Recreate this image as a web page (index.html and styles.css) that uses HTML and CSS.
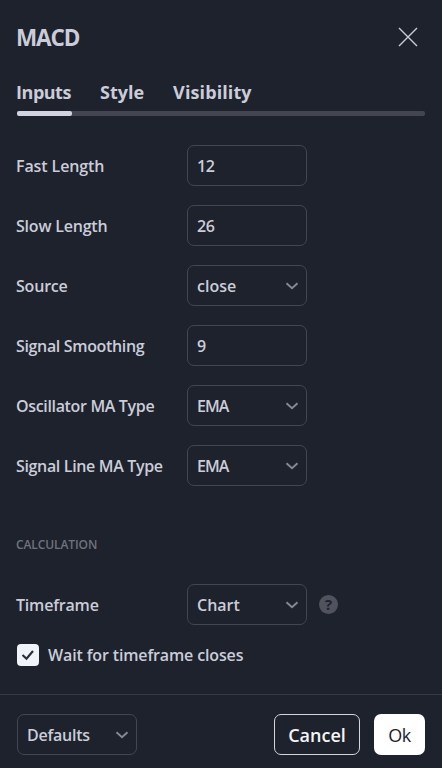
FILE: index.html
```html
<!DOCTYPE html>
<html lang="en">
<head>
  <meta charset="UTF-8" />
  <meta name="viewport" content="width=device-width, initial-scale=1.0" />
  <title>MACD</title>
  <link rel="stylesheet" href="styles.css">
</head>
<body>

  <div class="dialog">
    <div class="dialog-header">
      <h1>MACD</h1>
      <button type="button" class="close-btn" aria-label="Close">
        <svg width="20" height="20" viewBox="0 0 20 20"><path d="M1 1l18 18M19 1L1 19"/></svg>
      </button>
    </div>

    <div class="tabs">
      <button type="button" class="tab inputs-tab">Inputs</button>
      <button type="button" class="tab">Style</button>
      <button type="button" class="tab visibility-tab">Visibility</button>
    </div>
    <div class="tab-track"><div class="tab-thumb"></div></div>

    <!-- Inputs -->
    <div class="fields">
      <div class="row">
        <label for="fast">Fast Length</label>
        <input type="text" class="box" id="fast" value="12"/>
      </div>
      <div class="row">
        <label for="slow" class="slow">Slow Length</label>
        <input type="text" class="box" id="slow" value="26"/>
      </div>
      <div class="row">
        <label class="slow">Source</label>
        <button type="button" class="box select">
          <span>close</span>
          <svg class="chevron" width="14" height="8" viewBox="0 0 14 8"><path d="M1.5 1.3L7 6.3l5.5-5"/></svg>
        </button>
      </div>
      <div class="row">
        <label for="smoothing" class="long">Signal Smoothing</label>
        <input type="text" class="box" id="smoothing" value="9"/>
      </div>
      <div class="row">
        <label class="long">Oscillator MA Type</label>
        <button type="button" class="box select">
          <span class="ema">EMA</span>
          <svg class="chevron" width="14" height="8" viewBox="0 0 14 8"><path d="M1.5 1.3L7 6.3l5.5-5"/></svg>
        </button>
      </div>
      <div class="row">
        <label class="long">Signal Line MA Type</label>
        <button type="button" class="box select">
          <span class="ema">EMA</span>
          <svg class="chevron" width="14" height="8" viewBox="0 0 14 8"><path d="M1.5 1.3L7 6.3l5.5-5"/></svg>
        </button>
      </div>
    </div>

    <!-- Calculation -->
    <h2>CALCULATION</h2>
    <div class="row">
      <label class="slow">Timeframe</label>
      <button type="button" class="box select">
        <span>Chart</span>
        <svg class="chevron" width="14" height="8" viewBox="0 0 14 8"><path d="M1.5 1.3L7 6.3l5.5-5"/></svg>
      </button>
      <span class="help">?</span>
    </div>
    <div class="check-row">
      <span class="checkbox">
        <svg width="14" height="12" viewBox="0 0 14 12"><path d="M1.5 6l4 3.7L12 2"/></svg>
      </span>
      <span class="check-text">Wait for timeframe closes</span>
    </div>

    <div class="dialog-footer">
      <button type="button" class="box select defaults">
        <span>Defaults</span>
        <svg class="chevron" width="14" height="8" viewBox="0 0 14 8"><path d="M1.5 1.3L7 6.3l5.5-5"/></svg>
      </button>
      <button type="button" class="cancel-btn">Cancel</button>
      <button type="button" class="ok-btn">Ok</button>
    </div>
  </div>

</body>
</html>
```
FILE: styles.css
```css
* {
  margin: 0;
  padding: 0;
  box-sizing: border-box;
  font-family: "Open Sans", "Noto Sans", sans-serif;
}

body {
  background: #1e222d;
  color: #cacdd9;
  overflow: hidden;
}

button {
  border: none;
  background: none;
  color: inherit;
  cursor: pointer;
}

svg {
  display: block;
  fill: none;
  stroke: currentColor;
}

.dialog {
  height: 768px;
  display: flex;
  flex-direction: column;
}

.dialog-header {
  display: flex;
  align-items: center;
  justify-content: space-between;
  height: 74px;
  padding: 0 24px 0 16px;
}

h1 {
  font-size: 22.5px;
  font-weight: 700;
  letter-spacing: -1.1px;
}

.close-btn {
  stroke-width: 1.4;
}

.tabs {
  display: flex;
  height: 37px;
  padding-left: 16px;
  gap: 29px;
}

.tab {
  height: 35px;
  font-size: 18px;
  font-weight: 700;
}

.inputs-tab {
  width: 55px;
  letter-spacing: -0.5px;
}

.visibility-tab {
  letter-spacing: 0.1px;
}

.tab-track {
  height: 5px;
  margin: 0 17px;
  border-radius: 2px;
  background: #434651;
}

.tab-thumb {
  width: 55px;
  height: 5px;
  border-radius: 2px;
  background: #d1d4e0;
}

.fields {
  display: flex;
  flex-direction: column;
  gap: 19px;
  margin-top: 29px;
}

.row {
  display: flex;
  align-items: center;
  height: 41px;
  padding-left: 16px;
}

label {
  width: 171px;
  font-size: 16px;
  font-weight: 600;
  letter-spacing: -0.1px;
  white-space: nowrap;
}

label.slow {
  letter-spacing: -0.2px;
}

label.long {
  letter-spacing: -0.34px;
}

.box {
  width: 120px;
  height: 41px;
  padding: 0 9px;
  border: 1px solid #434651;
  border-radius: 7px;
  background: transparent;
  color: #cacdd9;
  font-size: 16px;
  font-weight: 600;
}

input.box {
  letter-spacing: -0.4px;
}

.ema {
  letter-spacing: -0.9px;
}

.defaults {
  letter-spacing: -0.25px;
}

.select {
  display: flex;
  align-items: center;
  justify-content: space-between;
}

.chevron {
  margin-right: -2px;
  color: #868993;
  stroke-width: 1.9;
}

h2 {
  height: 18px;
  margin: 50px 0 30px 16px;
  font-size: 12px;
  line-height: 18px;
  font-weight: 600;
  letter-spacing: -0.1px;
  color: #6f727d;
}

.help {
  width: 19px;
  height: 19px;
  margin-left: 12px;
  border-radius: 50%;
  background: #50535e;
  color: #1e222d;
  font-size: 15px;
  line-height: 19px;
  font-weight: 700;
  text-align: center;
}

.check-row {
  display: flex;
  align-items: center;
  height: 22px;
  margin: 19px 0 0 17px;
  gap: 9px;
}

.checkbox {
  display: flex;
  align-items: center;
  justify-content: center;
  width: 22px;
  height: 22px;
  border-radius: 4px;
  background: #f0f3fa;
  color: #2a2e39;
  stroke-width: 2.2;
}

.check-text {
  padding-bottom: 1px;
  font-size: 16px;
  font-weight: 600;
  letter-spacing: -0.14px;
}

.dialog-footer {
  display: flex;
  height: 74px;
  margin-top: auto;
  padding: 19px 17px 0;
  border-top: 1px solid #363a45;
}

.cancel-btn,
.ok-btn {
  height: 41px;
  border-radius: 7px;
  font-size: 18px;
}

.cancel-btn {
  width: 86px;
  margin-left: auto;
  border: 1px solid #d5d6da;
  color: #f5f5f7;
  font-weight: 600;
}

.ok-btn {
  width: 51px;
  margin-left: 14px;
  background: #fff;
  color: #1e222d;
  font-weight: 500;
  letter-spacing: -0.5px;
}
```
